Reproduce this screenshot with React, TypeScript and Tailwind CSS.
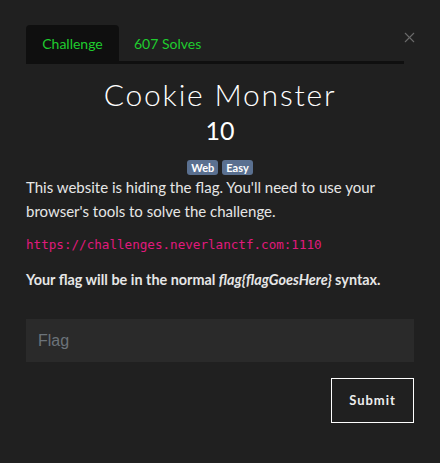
import { X } from 'lucide-react';

const App = () => {
  return (
    <div className="min-h-[463px] w-[440px] bg-[#202020] font-['Lato','Noto_Sans',sans-serif] text-[#e6e6e6]">
      <div className="relative px-[26px] pt-[25px]">
        <button className="absolute right-[22px] top-[29px] text-[#6a6a6a]">
          <X size={17} strokeWidth={1.5} />
        </button>
        <div className="mr-[10px] flex border-b-[3px] border-[#0f0f0f]">
          <div className="flex h-[36px] w-[93px] items-center justify-center rounded-t-[4px] bg-[#0f0f0f] text-[14px] text-[#1fcc2e]">
            Challenge
          </div>
          <div className="flex h-[36px] items-center px-[15px] text-[14px] text-[#1fcc2e]">607 Solves</div>
        </div>

        <h1 className="mt-[10px] text-center text-[30px] font-light leading-[40px] tracking-[1.8px] text-white">
          Cookie Monster
        </h1>
        <div className="text-center text-[25px] leading-[32px] text-white">10</div>

        <div className="mt-[14px] flex justify-center gap-[4px]">
          <span className="rounded-[3px] bg-[#5a7090] px-[4px] text-[11px] font-bold leading-[15px] text-white">Web</span>
          <span className="rounded-[3px] bg-[#5a7090] px-[4px] text-[11px] font-bold leading-[15px] text-white">Easy</span>
        </div>

        <p className="mt-0 text-[15px] leading-[24px]">
          This website is hiding the flag. You'll need to use your browser's tools to solve the challenge.
        </p>
        <p className="mt-[12px] font-['DejaVu_Sans_Mono',monospace] text-[12.6px] leading-[20px] text-[#e0197d]">
          https://challenges.neverlanctf.com:1110
        </p>
        <p className="mt-[13px] text-[14.4px] font-bold leading-[24px]">
          Your flag will be in the normal <em>flag{'{'}flagGoesHere{'}'}</em> syntax.
        </p>

        <input
          className="mt-[27px] h-[43px] w-full bg-[#2a2a2a] px-[12px] font-['Liberation_Sans',sans-serif] text-[16px] text-white outline-none placeholder:text-[#6c737a]"
          placeholder="Flag"
        />
        <div className="mt-[16px] flex justify-end">
          <button className="h-[45px] w-[83px] border border-white text-[13px] font-bold tracking-[1px] text-[#eeeeee]">
            Submit
          </button>
        </div>
      </div>
    </div>
  );
};

export default App;
